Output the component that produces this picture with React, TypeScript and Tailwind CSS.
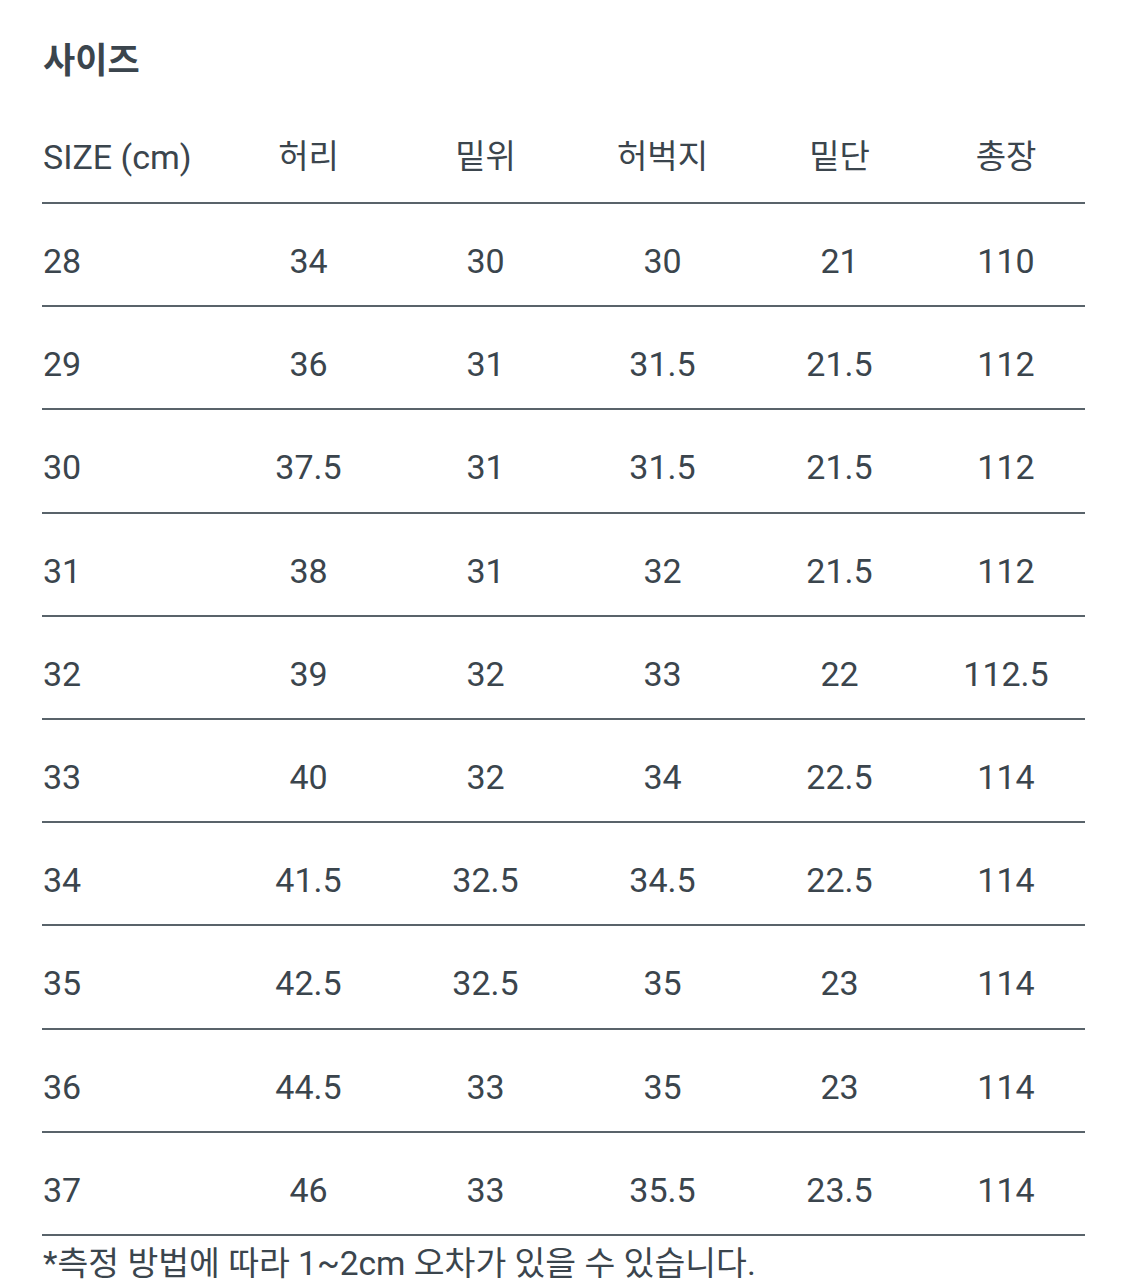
const headers = ["허리", "밑위", "허벅지", "밑단", "총장"]

const rows: string[][] = [
  ["28", "34", "30", "30", "21", "110"],
  ["29", "36", "31", "31.5", "21.5", "112"],
  ["30", "37.5", "31", "31.5", "21.5", "112"],
  ["31", "38", "31", "32", "21.5", "112"],
  ["32", "39", "32", "33", "22", "112.5"],
  ["33", "40", "32", "34", "22.5", "114"],
  ["34", "41.5", "32.5", "34.5", "22.5", "114"],
  ["35", "42.5", "32.5", "35", "23", "114"],
  ["36", "44.5", "33", "35", "23", "114"],
  ["37", "46", "33", "35.5", "23.5", "114"],
]

const grid = "grid grid-cols-[178px_177px_177px_177px_177px_156px]"

export default function App() {
  return (
    <div className="min-h-[1280px] w-[1125px] overflow-hidden bg-white font-['Roboto','Noto_Sans_CJK_KR',sans-serif] text-[#3b454d]">
      <div className="ml-[42px] w-[1043px]">
        <h2 className="pt-[42px] pl-[1px] text-[35px] leading-[40px] font-bold">사이즈</h2>

        <div className={`${grid} items-center border-b-2 border-[#59636a] pt-[55px] pb-[25px] leading-[40px]`}>
          <div className="pl-[1px] text-[34px]">SIZE (cm)</div>
          {headers.map((h) => (
            <div key={h} className="text-center text-[33px]">
              {h}
            </div>
          ))}
        </div>

        {rows.map((r) => (
          <div
            key={r[0]}
            className={`${grid} items-center border-b-2 border-[#59636a] pt-[37px] pb-[24.2px] text-[34px] leading-[40px]`}
          >
            {r.map((v, i) => (
              <div key={i} className={i === 0 ? "pl-[1px]" : "text-center"}>
                {v}
              </div>
            ))}
          </div>
        ))}

        <p className="pt-[8px] pl-[1px] text-[33.5px] leading-[40px] whitespace-nowrap">
          *측정 방법에 따라 1~2cm 오차가 있을 수 있습니다.
        </p>
      </div>
    </div>
  )
}
